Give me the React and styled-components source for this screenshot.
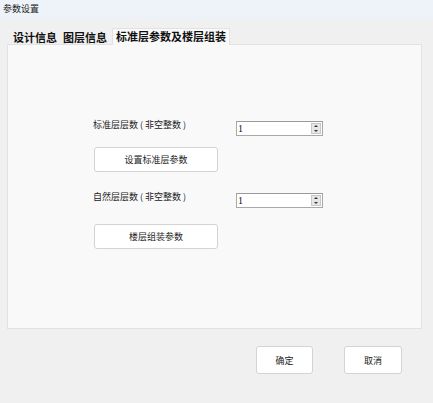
import React from "react";
import styled, { createGlobalStyle } from "styled-components";

const Global = createGlobalStyle`
  html, body { margin: 0; padding: 0; }
  body {
    width: 433px; height: 403px; overflow: hidden;
    background: #f0f0f0;
    font-family: "Noto Sans CJK SC", "Noto Sans", sans-serif;
    color: #1a1a1a;
  }
`;

const Window = styled.div`
  width: 433px; height: 403px;
  display: flex; flex-direction: column;
  background: #f0f0f0;
`;

const TitleBar = styled.div`
  height: 19px; flex: none;
  background: #eef3fa;
  display: flex; align-items: center;
  padding-left: 3px;
  font-size: 9px;
  color: #222;
  line-height: 1;
  padding-bottom: 3px;
  box-sizing: border-box;
`;

const TabBar = styled.div`
  height: 26px; flex: none;
  display: flex; align-items: flex-end;
  padding-left: 7px;
  margin-bottom: -1px;
  position: relative;
  z-index: 1;
`;

const Tab = styled.div`
  box-sizing: border-box;
  height: ${p => (p.$active ? 17 : 16)}px;
  padding: 0 ${p => p.$pr}px 0 ${p => p.$pl}px;
  font-size: 11px;
  font-weight: 700;
  line-height: 15px;
  color: #111;
  white-space: nowrap;
  background: ${p => (p.$active ? "#f9f9f9" : "transparent")};
  border: 1px solid ${p => (p.$active ? "#e2e2e2" : "transparent")};
  border-bottom: none;
`;

const Panel = styled.div`
  margin: 0 11px 0 7px;
  height: 285px;
  box-sizing: border-box;
  background: #f9f9f9;
  border: 1px solid #e2e2e2;
  padding: 76px 0 0 85px;
  display: flex; flex-direction: column;
`;

const Row = styled.div`
  display: flex; align-items: center;
  margin-top: ${p => p.$mt || 0}px;
`;

const Label = styled.div`
  width: 143px;
  font-size: 9px;
  line-height: 15px;
  color: #222;
  white-space: nowrap;
  margin-top: -8px;
`;

const Paren = styled.span`
  margin: 0 2px;
`;

const Spin = styled.div`
  width: 87px; height: 15px;
  box-sizing: border-box;
  border: 1px solid #a8a8a8;
  border-top-color: #9a9a9a;
  background: #fff;
  display: flex;
`;

const SpinValue = styled.div`
  flex: 1;
  font-family: "Liberation Serif", serif;
  font-size: 10px;
  line-height: 13px;
  padding-left: 1px;
  color: #111;
`;

const SpinButtons = styled.div`
  width: 10px;
  margin: 1px 1px 1px 0;
  background: #e6e6e6;
  border: 1px solid #c8c8c8;
  box-sizing: border-box;
  display: flex; flex-direction: column;
  align-items: center; justify-content: space-around;
`;

const Arrow = styled.div`
  width: 0; height: 0;
  border-left: 2px solid transparent;
  border-right: 2px solid transparent;
  ${p => (p.$up ? "border-bottom: 2px solid #333;" : "border-top: 2px solid #333;")}
`;

const Button = styled.button`
  box-sizing: border-box;
  width: ${p => p.$w}px; height: ${p => p.$h}px;
  margin-top: ${p => p.$mt || 0}px;
  margin-left: ${p => p.$ml || 0}px;
  background: #fff;
  border: 1px solid #d3d3d3;
  border-radius: 3px;
  font-family: "Noto Sans CJK SC", "Noto Sans", sans-serif;
  font-size: 9px;
  color: #222;
  padding: 0;
  flex: none;
  align-self: flex-start;
`;

const Footer = styled.div`
  display: flex; justify-content: flex-end;
  padding: 17px 31px 0 0;
  gap: 31px;
`;

function SpinBox({ value }) {
  return (
    <Spin>
      <SpinValue>{value}</SpinValue>
      <SpinButtons>
        <Arrow $up />
        <Arrow />
      </SpinButtons>
    </Spin>
  );
}

function CountLabel({ name }) {
  return (
    <Label>
      {name}
      <Paren>(</Paren>非空整数<Paren>)</Paren>
    </Label>
  );
}

export default function App() {
  return (
    <Window>
      <Global />
      <TitleBar>参数设置</TitleBar>
      <TabBar>
        <Tab $pl={5} $pr={3}>设计信息</Tab>
        <Tab $pl={1} $pr={4}>图层信息</Tab>
        <Tab $active $pl={3} $pr={3}>标准层参数及楼层组装</Tab>
      </TabBar>
      <Panel>
        <Row>
          <CountLabel name="标准层层数" />
          <SpinBox value="1" />
        </Row>
        <Button $w={124} $h={25} $mt={11} $ml={1}>设置标准层参数</Button>
        <Row $mt={21}>
          <CountLabel name="自然层层数" />
          <SpinBox value="1" />
        </Row>
        <Button $w={124} $h={25} $mt={16} $ml={1}>楼层组装参数</Button>
      </Panel>
      <Footer>
        <Button $w={57} $h={28}>确定</Button>
        <Button $w={58} $h={28}>取消</Button>
      </Footer>
    </Window>
  );
}
